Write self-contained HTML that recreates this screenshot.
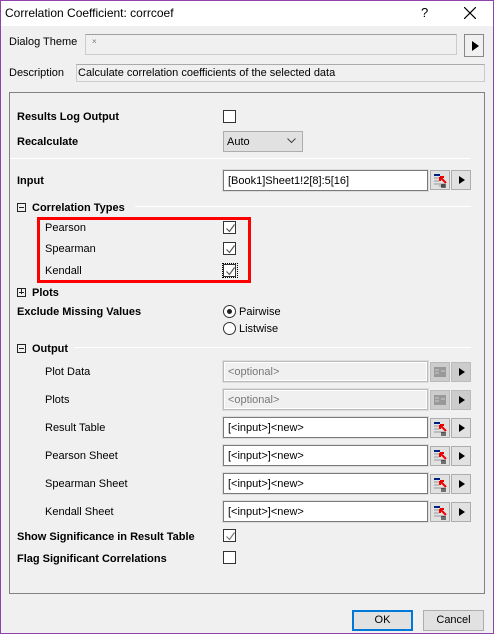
<!DOCTYPE html>
<html><head><style>
*{margin:0;padding:0;box-sizing:border-box}
body{width:494px;height:634px;background:#f0f0f0;font-family:"Liberation Sans",sans-serif;font-size:11px;color:#000;position:relative;overflow:hidden}
.a{position:absolute;white-space:nowrap}
.t{margin-top:1px}
.b{font-weight:bold}
.cb{position:absolute;width:13px;height:13px;border:1px solid #333;background:#fff}
.ck{position:absolute;width:13px;height:13px;border:1px solid #333;background:#fff}
.ck svg{position:absolute;left:1px;top:1px}
.tb{position:absolute;background:#fff;border:1px solid #7a7a7a;box-shadow:inset 0 0 0 1px #fff, 0 0 0 1px #ddd;padding:4px 4px 2px;font-size:11px;line-height:13px}
.tb.dis{background:#f0f0f0;color:#777;border-color:#bbb}
.btn{position:absolute;width:20px;height:20px;background:#e1e1e1;border:1px solid #adadad}
.btn .tri{position:absolute;left:7px;top:5px;width:0;height:0;border-left:6px solid #000;border-top:4.5px solid transparent;border-bottom:4.5px solid transparent}
.hline{position:absolute;height:1px;background:#a0a0a0;border-bottom:1px solid #fff}
.pm{position:absolute;width:9px;height:9px;border:1px solid #222}
.pm:before{content:"";position:absolute;left:1px;top:3px;width:5px;height:1px;background:#222}
</style></head><body>
<div class="a" style="left:0;top:0;width:494px;height:26px;background:#fff"></div>
<div class="a" style="left:0;top:0;width:1px;height:634px;background:#8e44ad"></div>
<div class="a" style="right:0;top:0;width:1px;height:634px;background:#8e44ad"></div>
<div class="a" style="left:0;top:0;width:494px;height:1px;background:#8e44ad"></div>
<div class="a" style="left:0;bottom:0;width:494px;height:1px;background:#8e44ad"></div>
<div class="a" style="left:5px;top:6px;font-size:12px">Correlation Coefficient: corrcoef</div>
<div class="a" style="left:421px;top:5px;font-size:13px">?</div>
<svg class="a" style="left:464px;top:7px" width="12" height="12"><path d="M0 0L12 12M12 0L0 12" stroke="#000" stroke-width="1.2"/></svg>

<div class="a" style="left:9px;top:36px">Dialog Theme</div>
<div class="a" style="left:85px;top:34px;width:372px;height:21px;border:1px solid #ccc;border-top-color:#a0a0a0;background:#f0f0f0"></div>
<div class="a" style="left:92px;top:37px;font-size:8px;color:#777">×</div>
<div class="btn" style="left:464px;top:34px;width:20px;height:23px;border-color:#888;background:#f0f0f0"><div class="tri" style="top:6px;border-left-width:7px;border-top-width:5px;border-bottom-width:5px"></div></div>
<div class="a" style="left:9px;top:67px">Description</div>
<div class="a" style="left:76px;top:64px;width:409px;height:18px;border:1px solid #ccc;border-top-color:#aaa;padding:2px 1px">Calculate correlation coefficients of the selected data</div>

<div class="a" style="left:9px;top:92px;width:476px;height:502px;border:1px solid #828282"></div>

<div class="a b t" style="left:17px;top:110px">Results Log Output</div>
<div class="cb" style="left:223px;top:110px"></div>
<div class="a b t" style="left:17px;top:135px">Recalculate</div>
<div class="a" style="left:223px;top:131px;width:80px;height:21px;border:1px solid #adadad;background:#e1e1e1;padding:4px 3px">Auto</div>
<svg class="a" style="left:287px;top:138px" width="9" height="6"><path d="M0.5 0.5L4.5 4.5L8.5 0.5" stroke="#444" fill="none"/></svg>
<div class="hline" style="left:10px;top:158px;width:460px"></div>

<div class="a b t" style="left:17px;top:174px">Input</div>
<div class="tb" style="left:223px;top:170px;width:205px;height:21px">[Book1]Sheet1!2[8]:5[16]</div>
<div class="btn" style="left:430px;top:170px"><svg width="18" height="18"><rect x="3" y="3" width="6" height="2" fill="#002080"/><path d="M3 7h7M3 10h5M3 13h11M8 15h6" stroke="#999"/><path d="M9 6l6 6M9 6v4M9 6h4" stroke="#e00" stroke-width="2"/><path d="M10 14h5M10 16h5" stroke="#000"/></svg></div>
<div class="btn" style="left:451px;top:170px"><div class="tri"></div></div>

<div class="pm" style="left:17px;top:203px"></div>
<div class="a b t" style="left:32px;top:201px">Correlation Types</div>
<div class="hline" style="left:135px;top:206px;width:336px"></div>

<div class="a" style="left:37px;top:217px;width:214px;height:66px;border:3px solid #f00"></div>
<div class="a t" style="left:45px;top:221px">Pearson</div>
<div class="a t" style="left:45px;top:242px">Spearman</div>
<div class="a t" style="left:45px;top:264px">Kendall</div>
<div class="ck" style="left:223px;top:221px"><svg width="11" height="11"><path d="M1.5 5.5l3 3 5-7" stroke="#555" fill="none" stroke-width="1.2"/></svg></div>
<div class="ck" style="left:223px;top:242px"><svg width="11" height="11"><path d="M1.5 5.5l3 3 5-7" stroke="#555" fill="none" stroke-width="1.2"/></svg></div>
<div class="ck" style="left:223px;top:264px"><svg width="11" height="11"><path d="M1.5 5.5l3 3 5-7" stroke="#555" fill="none" stroke-width="1.2"/></svg></div>
<div class="a" style="left:222px;top:263px;width:16px;height:15px;border:1px dotted #000"></div>

<div class="pm" style="left:17px;top:288px"></div><div class="a" style="left:21px;top:289px;width:1px;height:5px;background:#222"></div>
<div class="a b t" style="left:32px;top:286px">Plots</div>
<div class="a b t" style="left:17px;top:305px">Exclude Missing Values</div>
<div class="a" style="left:223px;top:305px;width:13px;height:13px;border:1px solid #333;border-radius:50%;background:#fff"></div>
<div class="a" style="left:227px;top:309px;width:5px;height:5px;border-radius:50%;background:#222"></div>
<div class="a t" style="left:239px;top:305px">Pairwise</div>
<div class="a" style="left:223px;top:322px;width:13px;height:13px;border:1px solid #333;border-radius:50%;background:#fff"></div>
<div class="a t" style="left:239px;top:322px">Listwise</div>

<div class="pm" style="left:17px;top:344px"></div>
<div class="a b t" style="left:32px;top:342px">Output</div>
<div class="hline" style="left:74px;top:347px;width:397px"></div>

<div class="a t" style="left:45px;top:365px">Plot Data</div>
<div class="a t" style="left:45px;top:393px">Plots</div>
<div class="a t" style="left:45px;top:421px">Result Table</div>
<div class="a t" style="left:45px;top:449px">Pearson Sheet</div>
<div class="a t" style="left:45px;top:477px">Spearman Sheet</div>
<div class="a t" style="left:45px;top:505px">Kendall Sheet</div>

<div class="tb dis" style="left:223px;top:361px;width:205px;height:21px">&lt;optional&gt;</div>
<div class="tb dis" style="left:223px;top:389px;width:205px;height:21px">&lt;optional&gt;</div>
<div class="btn" style="left:430px;top:362px;background:#ccc;border-color:#bbb"><svg width="18" height="18"><rect x="3" y="4" width="12" height="10" fill="#999"/><path d="M4 7h4M4 10h4M10 8h4" stroke="#ccc"/></svg></div>
<div class="btn" style="left:430px;top:390px;background:#ccc;border-color:#bbb"><svg width="18" height="18"><rect x="3" y="4" width="12" height="10" fill="#999"/><path d="M4 7h4M4 10h4M10 8h4" stroke="#ccc"/></svg></div>
<div class="btn" style="left:451px;top:362px;background:#ccc;border-color:#bbb"><div class="tri"></div></div>
<div class="btn" style="left:451px;top:390px;background:#ccc;border-color:#bbb"><div class="tri"></div></div>

<div class="tb" style="left:223px;top:417px;width:205px;height:21px">[&lt;input&gt;]&lt;new&gt;</div>
<div class="tb" style="left:223px;top:445px;width:205px;height:21px">[&lt;input&gt;]&lt;new&gt;</div>
<div class="tb" style="left:223px;top:473px;width:205px;height:21px">[&lt;input&gt;]&lt;new&gt;</div>
<div class="tb" style="left:223px;top:501px;width:205px;height:21px">[&lt;input&gt;]&lt;new&gt;</div>
<div class="btn" style="left:430px;top:418px"><svg width="18" height="18"><rect x="3" y="3" width="6" height="2" fill="#002080"/><path d="M3 7h7M3 10h5M3 13h11" stroke="#999"/><path d="M9 6l6 6M9 6v4M9 6h4" stroke="#e00" stroke-width="2"/><path d="M10 14h5M10 16h5" stroke="#000"/></svg></div>
<div class="btn" style="left:430px;top:446px"><svg width="18" height="18"><rect x="3" y="3" width="6" height="2" fill="#002080"/><path d="M3 7h7M3 10h5M3 13h11" stroke="#999"/><path d="M9 6l6 6M9 6v4M9 6h4" stroke="#e00" stroke-width="2"/><path d="M10 14h5M10 16h5" stroke="#000"/></svg></div>
<div class="btn" style="left:430px;top:474px"><svg width="18" height="18"><rect x="3" y="3" width="6" height="2" fill="#002080"/><path d="M3 7h7M3 10h5M3 13h11" stroke="#999"/><path d="M9 6l6 6M9 6v4M9 6h4" stroke="#e00" stroke-width="2"/><path d="M10 14h5M10 16h5" stroke="#000"/></svg></div>
<div class="btn" style="left:430px;top:502px"><svg width="18" height="18"><rect x="3" y="3" width="6" height="2" fill="#002080"/><path d="M3 7h7M3 10h5M3 13h11" stroke="#999"/><path d="M9 6l6 6M9 6v4M9 6h4" stroke="#e00" stroke-width="2"/><path d="M10 14h5M10 16h5" stroke="#000"/></svg></div>
<div class="btn" style="left:451px;top:418px"><div class="tri"></div></div>
<div class="btn" style="left:451px;top:446px"><div class="tri"></div></div>
<div class="btn" style="left:451px;top:474px"><div class="tri"></div></div>
<div class="btn" style="left:451px;top:502px"><div class="tri"></div></div>

<div class="a b t" style="left:17px;top:530px">Show Significance in Result Table</div>
<div class="ck" style="left:223px;top:529px"><svg width="11" height="11"><path d="M1.5 5.5l3 3 5-7" stroke="#777" fill="none" stroke-width="1.2"/></svg></div>
<div class="a b t" style="left:17px;top:552px">Flag Significant Correlations</div>
<div class="cb" style="left:223px;top:551px"></div>

<div class="a" style="left:352px;top:610px;width:61px;height:21px;border:2px solid #0078d7;background:#e1e1e1;text-align:center;line-height:17px">OK</div>
<div class="a" style="left:423px;top:610px;width:61px;height:21px;border:1px solid #adadad;background:#e1e1e1;text-align:center;line-height:19px">Cancel</div>
</body></html>
